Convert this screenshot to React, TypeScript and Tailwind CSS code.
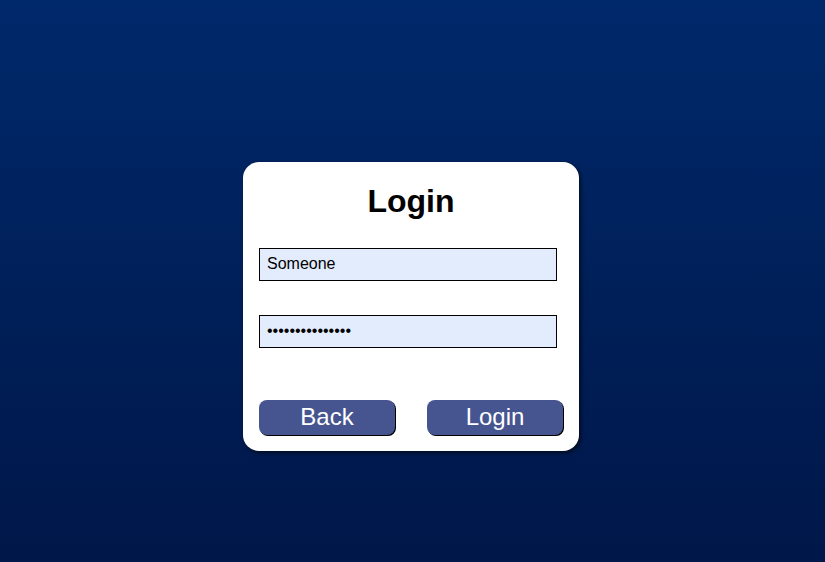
import React from "react";

export default function App() {
  return (
    <div
      className="w-[825px] h-[562px] flex items-center justify-center bg-gradient-to-b from-[#00296b] to-[#001749]"
      style={{ fontFamily: '"Liberation Sans", Arial, sans-serif' }}
    >
      <div className="w-[336px] h-[289px] mt-[51px] mr-[3px] bg-white rounded-[16px] shadow-[2px_2px_4px_rgba(0,0,0,0.6)] px-4 pt-[20px] flex flex-col">
        <h1 className="text-[32px] font-bold text-black text-center leading-[38px]">Login</h1>
        <input
          type="text"
          defaultValue="Someone"
          className="mt-[28px] w-[298px] h-[33px] border border-black bg-[#e3ecfd] px-[7px] pb-[1px] text-[16px] text-black outline-none"
        />
        <input
          type="password"
          defaultValue="aaaaaaaaaaaaaaa"
          className="mt-[34px] w-[298px] h-[33px] border border-black bg-[#e3ecfd] px-[7px] pb-[1px] text-[16px] text-black outline-none"
        />
        <div className="mt-[52px] flex justify-between">
          <button className="w-[136px] h-[35px] rounded-[8px] bg-[#465590] text-white text-[24px] leading-[28px] pb-[1px] shadow-[1px_1px_0_#000]">
            Back
          </button>
          <button className="w-[136px] h-[35px] rounded-[8px] bg-[#465590] text-white text-[24px] leading-[28px] pb-[1px] shadow-[1px_1px_0_#000]">
            Login
          </button>
        </div>
      </div>
    </div>
  );
}
